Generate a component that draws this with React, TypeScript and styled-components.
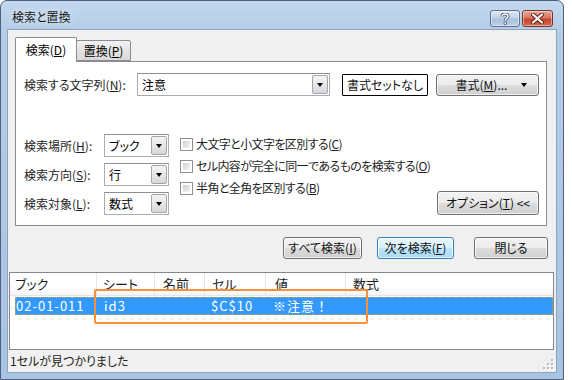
import styled, { createGlobalStyle } from "styled-components";

const GlobalStyle = createGlobalStyle`
  html, body {
    margin: 0;
    padding: 0;
    background: #fff;
  }
  body {
    font-family: "Noto Sans CJK JP", "Noto Sans", sans-serif;
    font-size: 12px;
    font-feature-settings: "palt";
    color: #000;
  }
  * {
    box-sizing: border-box;
  }
`;

const Window = styled.div`
  width: 564px;
  height: 380px;
  border: 1px solid #50607a;
  border-radius: 7px 7px 0 0;
  background: linear-gradient(to bottom, #c2d8ee 0px, #b3cce8 30px, #a8c4e3 100%);
  padding: 0 7px 7px 7px;
  display: flex;
  flex-direction: column;
`;

const TitleBar = styled.div`
  height: 29px;
  display: flex;
  align-items: flex-start;
`;

const Title = styled.div`
  flex: 1;
  padding: 7px 0 0 4px;
  line-height: 18px;
  color: #1a1a1a;
  text-shadow: 0 0 6px rgba(255, 255, 255, 0.9);
`;

const CaptionButton = styled.div<{ $close?: boolean }>`
  width: ${(p) => (p.$close ? 31 : 30)}px;
  height: 17px;
  margin-top: 9px;
  margin-right: ${(p) => (p.$close ? 3 : 2)}px;
  border: 1px solid ${(p) => (p.$close ? "#7a3228" : "#5f7088")};
  border-radius: 3px;
  display: flex;
  align-items: center;
  justify-content: center;
  background: ${(p) =>
    p.$close
      ? "linear-gradient(to bottom, #e9a99c 0%, #d7735f 48%, #c4432b 52%, #d2694f 100%)"
      : "linear-gradient(to bottom, #dde9f5 0%, #bfd2e8 48%, #a9c0dc 52%, #bcd0e6 100%)"};
  box-shadow: inset 0 0 0 1px rgba(255, 255, 255, 0.45);
`;

const Client = styled.div`
  flex: 1;
  background: #f0f0f0;
  display: flex;
  flex-direction: column;
  box-shadow: 0 0 0 1px #8ea4be;
`;

const TabArea = styled.div`
  padding: 7px 9px 0 7px;
`;

const TabStrip = styled.div`
  height: 24px;
  display: flex;
  align-items: flex-end;
`;

const Tab = styled.div<{ $active?: boolean }>`
  position: relative;
  z-index: ${(p) => (p.$active ? 2 : 1)};
  height: ${(p) => (p.$active ? 25 : 21)}px;
  width: ${(p) => (p.$active ? 62 : 55)}px;
  margin-bottom: ${(p) => (p.$active ? -1 : 0)}px;
  margin-left: ${(p) => (p.$active ? 0 : -1)}px;
  border: 1px solid #898c95;
  border-bottom: ${(p) => (p.$active ? "none" : "1px solid #898c95")};
  border-radius: 2px 2px 0 0;
  background: ${(p) =>
    p.$active ? "#fff" : "linear-gradient(to bottom, #f2f2f2 0%, #e3e3e3 50%, #d9d9d9 100%)"};
  display: flex;
  align-items: center;
  justify-content: center;
  line-height: 16px;
  padding-bottom: ${(p) => (p.$active ? 1 : 0)}px;
`;

const Panel = styled.div`
  height: 165px;
  border: 1px solid #898c95;
  background: #fff;
  padding: 11px 7px 10px 8px;
  display: flex;
  flex-direction: column;
`;

const SearchRow = styled.div`
  height: 23px;
  display: flex;
  align-items: center;
`;

const Label = styled.div<{ $w: number }>`
  width: ${(p) => p.$w}px;
  flex: none;
  line-height: 16px;
  white-space: nowrap;
  color: #1e1e1e;
`;

const ComboEdit = styled.div`
  width: 193px;
  height: 23px;
  border: 1px solid #abadb3;
  border-top-color: #8e9096;
  background: #fff;
  display: flex;
  align-items: stretch;
`;

const ComboText = styled.div`
  flex: 1;
  padding-left: 4px;
  display: flex;
  align-items: center;
  line-height: 16px;
`;

const DropButton = styled.div`
  width: 16px;
  flex: none;
  margin: 1px 1px 1px 0;
  border: 1px solid #a2a5ab;
  border-radius: 2px;
  background: linear-gradient(to bottom, #f4f4f4 0%, #e7e7e7 50%, #d7d7d7 100%);
  display: flex;
  align-items: center;
  justify-content: center;
`;

const Arrow = styled.span`
  width: 0;
  height: 0;
  border-left: 3.5px solid transparent;
  border-right: 3.5px solid transparent;
  border-top: 4px solid #000;
`;

const Button = styled.div<{ $w: number; $h?: number; $variant?: "dark" | "focus"; $gap?: number }>`
  width: ${(p) => p.$w}px;
  height: ${(p) => p.$h ?? 22}px;
  flex: none;
  margin-left: ${(p) => p.$gap ?? 0}px;
  border: 1px solid
    ${(p) => (p.$variant === "dark" ? "#000" : p.$variant === "focus" ? "#3c7fb1" : "#707070")};
  border-radius: ${(p) => (p.$variant === "dark" ? 1 : 3)}px;
  background: ${(p) =>
    p.$variant === "dark"
      ? "#fff"
      : p.$variant === "focus"
      ? "linear-gradient(to bottom, #eaf6fd 0%, #d9f0fc 50%, #bee6fd 51%, #a7d9f5 100%)"
      : "linear-gradient(to bottom, #f2f2f2 0%, #ebebeb 50%, #dddddd 51%, #cfcfcf 100%)"};
  box-shadow: ${(p) => (p.$variant === "dark" ? "none" : "inset 0 0 0 1px rgba(255,255,255,0.7)")};
  display: flex;
  align-items: center;
  justify-content: center;
  line-height: 16px;
  color: #111;
  white-space: nowrap;
`;

const MenuArrow = styled(Arrow)`
  margin-left: 14px;
  margin-right: -8px;
`;

const Lower = styled.div`
  margin-top: 38px;
  display: flex;
  align-items: flex-start;
`;

const Fields = styled.div`
  display: flex;
  flex-direction: column;
  gap: 6px;
`;

const FieldRow = styled.div`
  height: 23px;
  display: flex;
  align-items: center;
`;

const Select = styled.div`
  width: 65px;
  height: 23px;
  border: 1px solid #abadb3;
  border-top-color: #8e9096;
  background: #fff;
  display: flex;
  align-items: stretch;
`;

const Checks = styled.div`
  flex: 1;
  min-width: 0;
  margin-left: 11px;
  margin-top: -1px;
  display: flex;
  flex-direction: column;
`;

const CheckRow = styled.div`
  height: 22px;
  display: flex;
  align-items: center;
  gap: 2px;
  line-height: 16px;
  white-space: nowrap;
  letter-spacing: -0.6px;
  color: #1e1e1e;
`;

const CheckBox = styled.span`
  width: 13px;
  height: 13px;
  flex: none;
  border: 1px solid #8e8f8f;
  background: #fff;
  padding: 2px;
  margin-right: 1px;
  &::after {
    content: "";
    display: block;
    width: 100%;
    height: 100%;
    background: linear-gradient(135deg, #cbcfd5 0%, #f6f6f6 100%);
  }
`;

const OptionButton = styled(Button)`
  align-self: flex-end;
`;

const ButtonRow = styled.div`
  margin-top: 11px;
  padding-right: 8px;
  display: flex;
  justify-content: flex-end;
`;

const List = styled.div`
  position: relative;
  height: 78px;
  margin: 13px 2px 0 1px;
  border: 1px solid #828790;
  background: #fff;
  display: flex;
  flex-direction: column;
`;

const HeaderRow = styled.div`
  height: 23px;
  display: grid;
  grid-template-columns: 87px 58px 50px 61px 80px 1fr;
  background: linear-gradient(to bottom, #ffffff 0%, #ffffff 60%, #f4f5f7 100%);
  border-bottom: 1px solid #e5e5e5;
`;

const HeaderCell = styled.div<{ $pad: number }>`
  padding-left: ${(p) => p.$pad}px;
  border-right: 1px solid #e5e5e5;
  display: flex;
  align-items: center;
  line-height: 16px;
  font-size: 13px;
  color: #1e1e1e;
  &:last-child {
    border-right: none;
  }
`;

const DataRow = styled.div`
  height: 18px;
  margin: 1px 0 0 5px;
  display: grid;
  grid-template-columns: 82px 58px 50px 61px 80px 1fr;
  background: #3399ff;
  outline: 1px dotted #c9a25a;
  outline-offset: -1px;
  color: #fff;
`;

const DataCell = styled.div<{ $pad: number }>`
  padding-left: ${(p) => p.$pad}px;
  display: flex;
  align-items: center;
  line-height: 16px;
  font-size: 13px;
  white-space: nowrap;
  letter-spacing: 1px;
  font-feature-settings: normal;
`;

const Highlight = styled.div`
  position: absolute;
  left: 84px;
  top: 16px;
  width: 274px;
  height: 35px;
  border: 2px solid #f7923a;
  border-radius: 2px;
  pointer-events: none;
`;

const StatusBar = styled.div`
  height: 22px;
  padding-left: 2px;
  display: flex;
  align-items: center;
  justify-content: space-between;
  line-height: 16px;
  color: #1e1e1e;
`;

const Grip = styled.svg`
  align-self: flex-end;
  margin: 0 2px 2px 0;
`;

function CloseGlyph() {
  return (
    <svg width="13" height="11" viewBox="0 0 13 11">
      <path
        d="M2 1.5 L11 9.5 M11 1.5 L2 9.5"
        stroke="#5a1c12"
        strokeWidth="4"
        strokeLinecap="round"
      />
      <path
        d="M2 1.5 L11 9.5 M11 1.5 L2 9.5"
        stroke="#fff"
        strokeWidth="2.2"
        strokeLinecap="round"
      />
    </svg>
  );
}

function HelpGlyph() {
  return (
    <svg width="10" height="12" viewBox="0 0 10 12">
      <path
        d="M2 3.6 C2 1.6 3.4 1 5 1 C6.8 1 8 2 8 3.4 C8 5 5.2 5.4 5.2 7.4"
        stroke="#3a4b63"
        strokeWidth="3"
        fill="none"
      />
      <path
        d="M2 3.6 C2 1.6 3.4 1 5 1 C6.8 1 8 2 8 3.4 C8 5 5.2 5.4 5.2 7.4"
        stroke="#fff"
        strokeWidth="1.5"
        fill="none"
      />
      <rect x="3.7" y="8.6" width="3" height="3" fill="#3a4b63" />
      <rect x="4.4" y="9.3" width="1.6" height="1.6" fill="#fff" />
    </svg>
  );
}

const fields = [
  { label: "検索場所", key: "H", value: "ブック" },
  { label: "検索方向", key: "S", value: "行" },
  { label: "検索対象", key: "L", value: "数式" },
];

const checks = [
  { text: "大文字と小文字を区別する", key: "C" },
  { text: "セル内容が完全に同一であるものを検索する", key: "O" },
  { text: "半角と全角を区別する", key: "B" },
];

export default function App() {
  return (
    <>
      <GlobalStyle />
      <Window>
        <TitleBar>
          <Title>検索と置換</Title>
          <CaptionButton>
            <HelpGlyph />
          </CaptionButton>
          <CaptionButton $close>
            <CloseGlyph />
          </CaptionButton>
        </TitleBar>
        <Client>
          <TabArea>
            <TabStrip>
              <Tab $active>
                <span>
                  検索(<u>D</u>)
                </span>
              </Tab>
              <Tab>
                <span>
                  置換(<u>P</u>)
                </span>
              </Tab>
            </TabStrip>
            <Panel>
              <SearchRow>
                <Label $w={113}>
                  検索する文字列(<u>N</u>):
                </Label>
                <ComboEdit>
                  <ComboText>注意</ComboText>
                  <DropButton>
                    <Arrow />
                  </DropButton>
                </ComboEdit>
                <Button $w={86} $variant="dark" $gap={12}>
                  <span>書式セットなし</span>
                </Button>
                <Button $w={103} $gap={8}>
                  <span>
                    書式(<u>M</u>)...
                  </span>
                  <MenuArrow />
                </Button>
              </SearchRow>
              <Lower>
                <Fields>
                  {fields.map((f) => (
                    <FieldRow key={f.key}>
                      <Label $w={80}>
                        {f.label}(<u>{f.key}</u>):
                      </Label>
                      <Select>
                        <ComboText>{f.value}</ComboText>
                        <DropButton>
                          <Arrow />
                        </DropButton>
                      </Select>
                    </FieldRow>
                  ))}
                </Fields>
                <Checks>
                  {checks.map((c) => (
                    <CheckRow key={c.key}>
                      <CheckBox />
                      <span>
                        {c.text}(<u>{c.key}</u>)
                      </span>
                    </CheckRow>
                  ))}
                </Checks>
                <OptionButton $w={102} $h={24}>
                  <span>
                    オプション(<u>T</u>) &lt;&lt;
                  </span>
                </OptionButton>
              </Lower>
            </Panel>
          </TabArea>
          <ButtonRow>
            <Button $w={79}>
              <span>
                すべて検索(<u>I</u>)
              </span>
            </Button>
            <Button $w={77} $variant="focus" $gap={15}>
              <span>
                次を検索(<u>F</u>)
              </span>
            </Button>
            <Button $w={74} $gap={20}>
              <span>閉じる</span>
            </Button>
          </ButtonRow>
          <List>
            <HeaderRow>
              <HeaderCell $pad={5}>ブック</HeaderCell>
              <HeaderCell $pad={6}>シート</HeaderCell>
              <HeaderCell $pad={8}>名前</HeaderCell>
              <HeaderCell $pad={7}>セル</HeaderCell>
              <HeaderCell $pad={9}>値</HeaderCell>
              <HeaderCell $pad={7}>数式</HeaderCell>
            </HeaderRow>
            <DataRow>
              <DataCell $pad={1}>02-01-011</DataCell>
              <DataCell $pad={7}>id3</DataCell>
              <DataCell $pad={0} />
              <DataCell $pad={6}>$C$10</DataCell>
              <DataCell $pad={7}>※注意！</DataCell>
              <DataCell $pad={7} />
            </DataRow>
            <Highlight />
          </List>
          <StatusBar>
            <span>1セルが見つかりました</span>
            <Grip width="11" height="11" viewBox="0 0 11 11">
              {[
                [8, 0],
                [8, 4],
                [4, 4],
                [8, 8],
                [4, 8],
                [0, 8],
              ].map(([x, y]) => (
                <g key={`${x}-${y}`}>
                  <rect x={x + 1} y={y + 1} width="2" height="2" fill="#fff" />
                  <rect x={x} y={y} width="2" height="2" fill="#b8b8b8" />
                </g>
              ))}
            </Grip>
          </StatusBar>
        </Client>
      </Window>
    </>
  );
}
